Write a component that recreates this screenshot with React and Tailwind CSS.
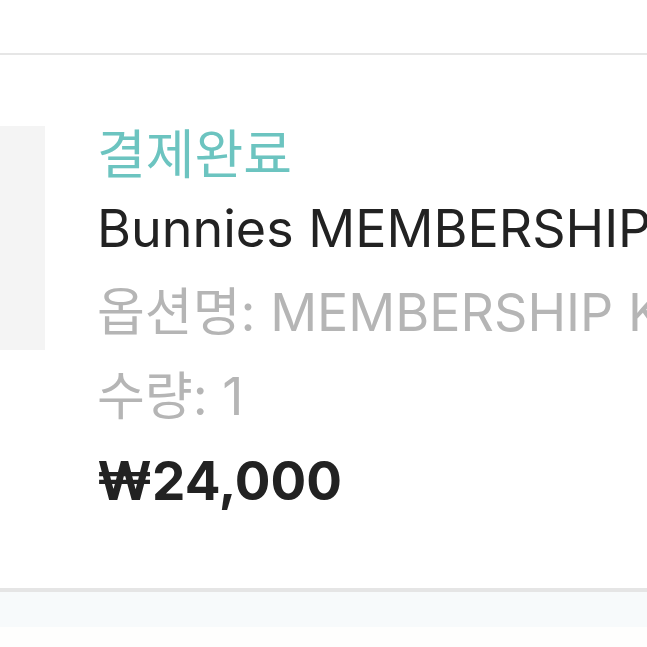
const App = () => {
    return (
        <div className="w-[647px] h-[647px] overflow-hidden bg-white" style={{ fontFamily: 'Inter, "Noto Sans CJK KR", sans-serif' }}>
            <div className="h-[53px] bg-white"></div>
            <div className="h-[2px] bg-[#e6e6e6]"></div>

            {/* order item */}
            <div className="h-[533px] flex items-start">
                <div className="mt-[71px] w-[45px] h-[224px] bg-[#f4f4f4] shrink-0"></div>
                <div className="ml-[52px] mt-[60px] flex flex-col whitespace-nowrap text-[52px] leading-[84px]">
                    <p className="text-[#6cc4c0] text-[53px] pt-[8px] leading-[64px]">결제완료</p>
                    <p className="text-[#222222]">Bunnies MEMBERSHIP KIT</p>
                    <p className="text-[#b5b5b5]">옵션명: MEMBERSHIP KIT</p>
                    <p className="text-[#b5b5b5]">수량: 1</p>
                    <p className="text-[#222222] text-[53px] font-bold">₩24,000</p>
                </div>
            </div>

            <div className="h-[4px] bg-[#e5e5e5]"></div>
            <div className="h-[35px] bg-[#f7fafb]"></div>
            <div className="h-[20px] bg-[#fefefd]"></div>
        </div>
    );
};

export default App;
